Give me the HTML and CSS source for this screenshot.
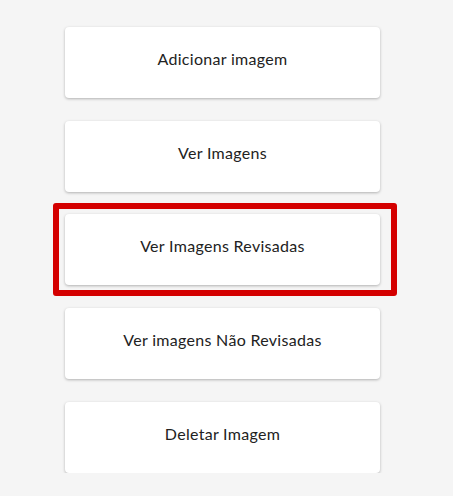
FILE: index.html
```html
<!DOCTYPE html>
<html lang="pt">
<head>
    <meta charset="UTF-8">
    <meta name="viewport" content="width=device-width, initial-scale=1.0">
    <title>Imagens</title>
    <link rel="stylesheet" href="styles.css">
</head>
<body>
    <div class="menu">
        <button class="menu-btn">Adicionar imagem</button>
        <button class="menu-btn">Ver Imagens</button>
        <!-- highlighted option -->
        <div class="highlight">
            <button class="menu-btn">Ver Imagens Revisadas</button>
        </div>
        <button class="menu-btn">Ver imagens Não Revisadas</button>
        <button class="menu-btn">Deletar Imagem</button>
    </div>
</body>
</html>
```

FILE: styles.css
```css
body {
    font-family: "Lato", "Open Sans", sans-serif;
    background-color: #f5f5f5;
    margin: 0;
    padding: 0;
}
.menu {
    display: flex;
    flex-direction: column;
    gap: 23px;
    width: 315px;
    margin-left: 65px;
    padding-top: 27px;
}
.menu-btn {
    display: block;
    width: 100%;
    height: 71px;
    padding: 0 0 8px;
    background-color: #fff;
    color: #222;
    border: none;
    border-radius: 4px;
    box-shadow: 0 1px 3px rgba(0, 0, 0, 0.28);
    font-family: inherit;
    font-size: 16px;
    letter-spacing: 0.3px;
    cursor: pointer;
}
.highlight {
    border: 6px solid #d40000;
    border-radius: 3px;
    margin: -12px -17px -11px -12px;
    padding: 5px 11px 5px 6px;
}
```
